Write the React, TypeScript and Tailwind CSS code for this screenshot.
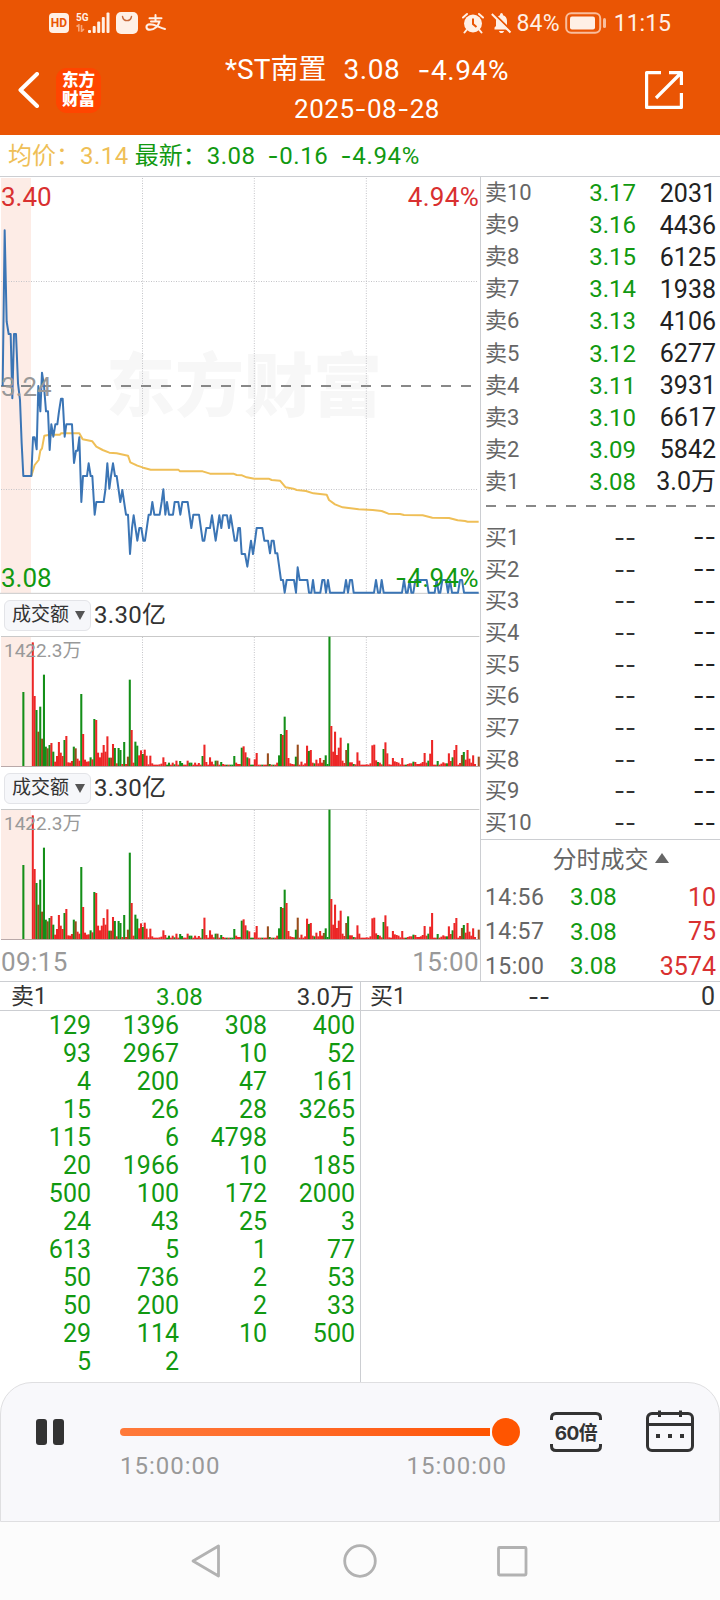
import { Fragment } from "react";

const SELLS = [
  ["卖10", "3.17", "2031"],
  ["卖9", "3.16", "4436"],
  ["卖8", "3.15", "6125"],
  ["卖7", "3.14", "1938"],
  ["卖6", "3.13", "4106"],
  ["卖5", "3.12", "6277"],
  ["卖4", "3.11", "3931"],
  ["卖3", "3.10", "6617"],
  ["卖2", "3.09", "5842"],
  ["卖1", "3.08", "3.0万"],
];

const BUYS = ["买1", "买2", "买3", "买4", "买5", "买6", "买7", "买8", "买9", "买10"];

const TRADES = [
  ["14:56", "3.08", "10"],
  ["14:57", "3.08", "75"],
  ["15:00", "3.08", "3574"],
];

const QUEUE = [
  ["129", "1396", "308", "400"],
  ["93", "2967", "10", "52"],
  ["4", "200", "47", "161"],
  ["15", "26", "28", "3265"],
  ["115", "6", "4798", "5"],
  ["20", "1966", "10", "185"],
  ["500", "100", "172", "2000"],
  ["24", "43", "25", "3"],
  ["613", "5", "1", "77"],
  ["50", "736", "2", "53"],
  ["50", "200", "2", "33"],
  ["29", "114", "10", "500"],
  ["5", "2", "", ""],
];

// chart units: 3 per css pixel
const PRICE_LINE =
  "8,648 14,181 20,455 26,492 32,492 37,685 42,492 48,492 54,640 60,690 65,820 70,918 94,918 99,802 104,802 110,838 115,648 121,724 126,608 132,648 138,724 144,724 149,840 154,763 160,800 166,763 172,763 177,724 183,686 188,686 194,800 199,763 216,763 222,879 228,842 233,842 238,802 244,996 249,918 261,918 266,880 272,918 277,918 284,1034 289,996 311,996 316,960 322,880 328,956 333,918 339,880 345,918 350,918 361,996 367,960 378,1034 384,1034 390,1152 396,1074 401,1036 412,1112 418,1074 424,1074 430,1112 435,1112 446,1034 452,1034 457,996 463,1034 479,1034 485,996 490,958 496,1034 501,996 507,1034 519,1034 524,996 535,996 541,1034 547,996 563,996 574,1074 580,1034 597,1034 608,1112 613,1112 619,1074 630,1074 636,1036 647,1112 658,1036 664,1074 669,1036 681,1036 687,1074 692,1036 704,1112 710,1112 715,1074 720,1074 725,1152 735,1152 742,1190 753,1112 759,1152 765,1112 770,1074 787,1074 793,1112 804,1112 810,1150 815,1112 821,1112 826,1150 832,1150 843,1230 849,1230 854,1268 860,1230 882,1230 888,1268 893,1192 899,1230 922,1230 927,1268 934,1268 939,1230 944,1268 961,1268 967,1230 973,1230 978,1268 984,1230 990,1268 1032,1268 1038,1230 1044,1268 1050,1230 1056,1230 1061,1268 1122,1268 1128,1230 1134,1268 1140,1268 1145,1230 1151,1268 1206,1268 1212,1230 1218,1268 1223,1268 1229,1230 1234,1268 1240,1268 1246,1230 1280,1230 1286,1268 1304,1268 1310,1230 1316,1268 1321,1268 1327,1230 1338,1230 1344,1268 1350,1230 1356,1268 1374,1268 1380,1230 1386,1230 1392,1268 1436,1268";

const AVERAGE_LINE =
  "94,918 104,885 116,870 121,842 126,835 133,797 149,794 180,794 183,790 238,790 248,808 277,814 289,830 308,840 328,848 350,850 384,857 391,877 412,887 430,893 452,899 535,899 540,904 608,904 630,911 700,911 710,915 726,916 740,922 763,926 806,926 815,930 840,932 857,952 880,956 890,960 918,963 940,970 980,974 987,990 1005,1003 1028,1012 1076,1018 1118,1020 1145,1023 1165,1031 1200,1032 1212,1035 1268,1036 1297,1043 1347,1044 1373,1051 1395,1053 1403,1055 1436,1055";

const VOLUME =
  "r373 r212 g170 d105 g180 d84 g276 g60 d55 g65 r71 g45 r15 r32 r74 r42 r32 g80 r92 r13 r12 r17 g60 d55 r24 r18 g218 r98 r21 r15 r16 g28 r22 g143 r140 r42 r28 r42 r65 r45 r91 g27 d27 r68 g56 r10 g56 g50 r8 g74 r8 d30 g261 r110 r12 g75 g63 r34 r49 g38 r51 r33 r7 r33 r10 r6 r6 r6 r7 r9 r28 r14 g6 g12 r6 r12 g7 r18 r6 g17 g11 r6 r6 r18 g12 g12 r6 r12 r6 r11 r6 g32 r66 r14 r6 r28 r15 r7 g18 d18 r6 g14 r8 r6 g6 r6 g6 g6 g32 r12 r8 r8 g57 r61 r43 g28 r25 g6 g6 r22 r41 r6 r6 g6 r6 r6 d40 g8 r6 g6 r6 r12 g34 g98 r95 g150 r110 r26 r10 r8 r7 g30 d66 r6 r15 r6 r10 r63 g47 r50 r12 g10 r21 r10 r26 r12 d20 g34 g8 g390 r122 r45 r105 r35 r57 r87 r18 r11 d50 g70 r13 r13 g8 r7 r43 r18 r6 r6 r6 r7 r6 r10 r64 r66 r19 g14 r12 r7 g53 r73 r40 r7 r6 r26 r16 r14 r12 r7 r26 r6 g6 r8 r10 r10 g15 r14 r8 r8 r10 r14 r41 r12 g18 r39 r80 r6 r6 g17 r6 r9 r13 r10 g10 r40 r17 g28 r50 r65 r6 r11 d35 g44 r21 r50 r24 r12 r34 r8 r0 d30".split(
    " "
  );

const BAR_COLORS: Record<string, string> = { r: "#ec2626", g: "#148f18", d: "#984c1c" };

// hyphens are drawn with the wider Inter dash
const Num = ({ children }: { children: string }) => (
  <>
    {children.split("-").map((part, i) => (
      <Fragment key={i}>
        {i > 0 && <span className="font-['Inter',sans-serif]">-</span>}
        {part}
      </Fragment>
    ))}
  </>
);

const StatusBar = () => (
  <div className="flex h-[46px] items-center pl-[49px] pr-[49px] text-[#fff0e6]">
    <div className="flex h-5 w-5 items-center justify-center rounded bg-[#fff0e6] text-[12px] leading-none font-bold text-[#ea5504]">
      HD
    </div>
    <div className="ml-[7px] flex h-[22px] flex-col">
      <span className="text-[10px] leading-[12px] font-bold">5G</span>
      <svg width="9" height="8" viewBox="0 0 9 8" fill="none" stroke="#f8a578" strokeWidth="1.6">
        <path d="M0.5 2.5 L2.8 1 V7.5 M5.5 1 V7.5 L8 5" />
      </svg>
    </div>
    <svg className="-ml-[1px]" width="22" height="22" viewBox="0 0 22 22" fill="currentColor">
      <rect x="0" y="18" width="3" height="3" rx="1" />
      <rect x="4.7" y="14" width="3" height="7" rx="1" />
      <rect x="9.2" y="9.5" width="3" height="11.5" rx="1" />
      <rect x="13.8" y="5" width="3" height="16" rx="1" />
      <rect x="18.5" y="0.5" width="3" height="20.5" rx="1" />
    </svg>
    <svg className="ml-[6px]" width="22" height="22" viewBox="0 0 22 22">
      <rect width="22" height="22" rx="5" fill="#fff0e6" />
      <path d="M6.5 4.5 C7.5 10 14.500 10 15.5 4.5" fill="none" stroke="#c86a3c" strokeWidth="1.4" strokeLinecap="round" />
    </svg>
    <svg className="ml-[7px]" width="22" height="18" viewBox="0 0 22 18" fill="none" stroke="currentColor" strokeWidth="2" strokeLinecap="round">
      <path d="M4.5 4.2 H16.5 M10.5 1 V7.500 M6 7.500 H14.5 C13.5 12 9.500 15.800 5 15.800 C0.500 15.800 0 10.500 5 10.200 C10 10.200 14 13.500 20 15" />
    </svg>
    <div className="ml-auto flex items-center">
      <svg width="22" height="22" viewBox="0 0 22 22">
        <circle cx="11" cy="11.5" r="9" fill="currentColor" />
        <path d="M1 5.5 L5 2 M21 5.5 L17 2 M4.5 18 L2.5 20.5 M17.5 18 L19.5 20.5" stroke="currentColor" strokeWidth="2" strokeLinecap="round" />
        <path d="M11 6.5 V12 L14.5 15" fill="none" stroke="#ea5504" strokeWidth="2" />
      </svg>
      <svg className="ml-[7px]" width="21" height="22" viewBox="0 0 21 22">
        <path d="M3.5 17.5 V15.5 L5 14 V9 C5 5.5 7 3.7 9 3.2 C9 0.3 12 0.3 12 3.2 C14.5 3.7 16 6 16 9 V14 L17.5 15.5 V17.5 Z M8 19 H13 C12.5 21.8 8.5 21.8 8 19 Z" fill="currentColor" />
        <path d="M1.5 0.5 L21 19.5" stroke="#ea5504" strokeWidth="2.2" />
        <path d="M0.8 2 L19.5 20.5" stroke="currentColor" strokeWidth="2" />
      </svg>
      <span className="ml-1 pt-px text-[23px] leading-none tracking-[0.2px]">84%</span>
      <svg className="ml-[5px]" width="42" height="22" viewBox="0 0 42 22">
        <rect x="1.2" y="1.2" width="34" height="19.6" rx="5" fill="none" stroke="#f9bd9c" strokeWidth="2" />
        <rect x="5" y="4.5" width="25" height="13" rx="2" fill="currentColor" />
        <rect x="38" y="6" width="3" height="10" rx="1.5" fill="#f9bd9c" />
      </svg>
      <span className="ml-[7px] pt-px text-[23px] leading-none">11:15</span>
    </div>
  </div>
);

const Header = () => (
  <header className="h-[135px] shrink-0 bg-[#ea5504]">
    <StatusBar />
    <div className="flex h-[88px] text-white">
      <svg className="mt-[26px] ml-[17px]" width="24" height="36" viewBox="0 0 24 36" fill="none" stroke="currentColor" strokeWidth="4" strokeLinecap="round" strokeLinejoin="round">
        <path d="M20 2 L3.5 18 L20 34" />
      </svg>
      <div className="mt-[22px] ml-[15px] flex h-[45px] w-[45px] flex-col items-center justify-center rounded-[11px] bg-[#ff4500] text-[16.5px] leading-[18.5px] font-black">
        <span>东方</span>
        <span>财富</span>
      </div>
      <div className="flex w-[532px] flex-col items-center">
        <div className="flex h-[47px] items-center gap-[17px] pt-px text-[28px] leading-none tracking-[0.6px]">
          <span className="tracking-normal">*ST南置</span>
          <span>3.08</span>
          <span>
            <Num>-4.94%</Num>
          </span>
        </div>
        <div className="flex h-8 items-center text-[26px] leading-none tracking-[0.5px]">
          <Num>2025-08-28</Num>
        </div>
      </div>
      <svg className="mt-[24px] ml-[11px] shrink-0" width="40" height="40" viewBox="0 0 40 40" fill="none" stroke="currentColor" strokeWidth="3.2" strokeLinejoin="round">
        <path d="M17 2.6 H2.6 V37.4 H37.4 V23 M25 2.6 H37.4 V15 M37 3 L12 28" />
      </svg>
    </div>
  </header>
);

const GRID_X = [427.5, 763, 1099];

const PriceChart = () => (
  <div className="relative h-[417px] text-[26px] leading-none">
    <div className="absolute top-[171px] left-[106px] text-[69px] leading-[80px] font-black whitespace-nowrap text-[#f7f7f7]">
      东方财富
    </div>
    <svg className="absolute inset-0" width="480" height="417" viewBox="0 21 1440 1251" fill="none">
      <rect x="3" y="24" width="90" height="1245" fill="#fdece6" />
      <g stroke="#c4c4c8" strokeWidth="3" strokeDasharray="3 4.5">
        {GRID_X.map((x) => (
          <path key={x} d={`M${x} 24 V1269`} />
        ))}
        <path d="M3 334.5 H1434 M3 958.5 H1434" />
      </g>
      <path d="M3 648 H1416" stroke="#888" strokeWidth="5.500" strokeDasharray="30 30" />
      <path d="M0 1270 H1438" stroke="#c9c9c9" strokeWidth="3" />
      <polyline points={AVERAGE_LINE} stroke="#efbf57" strokeWidth="6" strokeLinejoin="round" />
      <polyline points={PRICE_LINE} stroke="#3b75b5" strokeWidth="6" strokeLinejoin="round" />
    </svg>
    <span className="absolute top-[7px] left-[1px] text-[#d93030]">3.40</span>
    <span className="absolute top-[7px] right-[1px] text-[#d93030] tracking-[0.3px]">4.94%</span>
    <span className="absolute top-[197px] left-[1px] text-[#999]">3.24</span>
    <span className="absolute bottom-[3px] left-[1px] text-[#119911]">3.08</span>
    <span className="absolute right-[1px] bottom-[3px] text-[#119911] tracking-[0.4px]">
      <Num>-4.94%</Num>
    </span>
  </div>
);

const VolumeChart = () => (
  <>
    <div className="flex h-[42px] items-center pl-1 text-[#333]">
      <div className="flex h-[31px] w-[87px] items-center rounded-md border border-[#e3e4e8] bg-[#f6f7fa] pl-[7px] text-[19px] leading-none">
        <span className="-mt-px">成交额</span>
        <svg className="ml-[6px]" width="10" height="9" viewBox="0 0 10 9">
          <path d="M0 0 H10 L5 9 Z" fill="#555" />
        </svg>
      </div>
      <span className="-mt-px ml-[3px] text-[24px] leading-none tracking-[0.3px]">3.30亿</span>
    </div>
    <div className="relative h-[131px]">
      <svg width="480" height="131" viewBox="0 135 1440 393">
        <rect x="3" y="136" width="90" height="391" fill="#fdece6" />
        <path d="M3 136.5 H1438" stroke="#c9c9c9" strokeWidth="3" />
        {GRID_X.map((x) => (
          <path key={x} d={`M${x} 138 V527`} stroke="#c4c4c8" strokeWidth="3" strokeDasharray="3 4.5" />
        ))}
        <rect x="67" y="303" width="6.2" height="224" fill={BAR_COLORS.g} />
        {VOLUME.map((bar, i) => {
          const height = Number(bar.slice(1));
          return <rect key={i} x={95.2 + i * 5.598} y={527 - height} width="6.2" height={height} fill={BAR_COLORS[bar[0]]} />;
        })}
        <path d="M3 526.5 H1438" stroke="#b9a9a9" strokeWidth="3" />
      </svg>
      <span className="absolute top-[5px] left-[4px] text-[19px] leading-none text-[#999]">1422.3万</span>
    </div>
  </>
);

const OrderRow = ({ label, price, amount }: { label: string; price: string; amount: string }) => (
  <div className="flex flex-1 items-center leading-none">
    <span className="w-[70px] text-[22px] text-[#666]">{label}</span>
    <span className={`w-[81px] text-right text-[24px] ${price === "--" ? "text-[#333]" : "text-[#119911]"}`}>
      <Num>{price}</Num>
    </span>
    <span className="ml-auto text-[25px] text-[#222]">
      <Num>{amount}</Num>
    </span>
  </div>
);

const OrderBook = () => (
  <div className="flex w-[240px] flex-col border-l border-[#ccced2]">
    <div className="flex h-[321px] shrink-0 flex-col pr-1 pl-1">
      {SELLS.map(([label, price, amount]) => (
        <OrderRow key={label} label={label} price={price} amount={amount} />
      ))}
    </div>
    <svg className="ml-[5px] h-6 shrink-0" width="229" height="24" viewBox="0 0 229 24">
      <path d="M0 8 H229" stroke="#888" strokeWidth="2" strokeDasharray="10 10" />
    </svg>
    <div className="flex h-[317px] shrink-0 flex-col pr-1 pl-1">
      {BUYS.map((label) => (
        <OrderRow key={label} label={label} price="--" amount="--" />
      ))}
    </div>
    <div className="flex h-[142px] shrink-0 flex-col border-t border-[#ccced2] pr-1 pl-1">
      <div className="flex h-[40px] shrink-0 items-center justify-center pl-[20px] text-[24px] leading-none text-[#666]">
        分时成交
        <svg className="-mt-1 ml-[6px]" width="14" height="10" viewBox="0 0 14 10">
          <path d="M7 0 L14 10 H0 Z" fill="#666" />
        </svg>
      </div>
      {TRADES.map(([time, price, amount]) => (
        <div key={time} className="flex h-[34.5px] shrink-0 items-center leading-none">
          <span className="w-[85px] text-[23px] tracking-[0.4px] text-[#666]">{time}</span>
          <span className="text-[24px] text-[#119911]">{price}</span>
          <span className="ml-auto text-[25px] text-[#d93030]">{amount}</span>
        </div>
      ))}
    </div>
  </div>
);

const Queue = () => (
  <div className="flex h-[401px] shrink-0 border-t border-[#ccced2] leading-none">
    <div className="w-[361px] border-r border-[#ccced2]">
      <div className="flex h-[29px] items-center border-b border-[#ccced2] pt-px pr-[6px] pl-[11px] text-[#333]">
        <span className="w-[145px] text-[23px]">卖1</span>
        <span className="text-[24px] text-[#119911]">3.08</span>
        <span className="ml-auto text-[24px]">3.0万</span>
      </div>
      {QUEUE.map((row, i) => (
        <div key={i} className="flex h-7 pl-[3px] text-right text-[25px] leading-[30px] text-[#119911]">
          {row.map((value, j) => (
            <span key={j} className="w-[88px]">
              {value}
            </span>
          ))}
        </div>
      ))}
    </div>
    <div className="flex-1">
      <div className="flex h-[29px] items-center border-b border-[#ccced2] pt-px pr-[5px] pl-[9px] text-[#333]">
        <span className="w-[158px] text-[23px]">买1</span>
        <span className="text-[24px]">
          <Num>--</Num>
        </span>
        <span className="ml-auto text-[25px]">0</span>
      </div>
    </div>
  </div>
);

const Player = () => (
  <div className="flex h-[140px] shrink-0 rounded-t-[32px] border border-[#dfdfe1] bg-[#f8f8fb]">
    <div className="mt-[36px] ml-[35px] flex h-[26px] gap-[6px]">
      <div className="w-[11px] rounded-[3px] bg-[#333]" />
      <div className="w-[11px] rounded-[3px] bg-[#333]" />
    </div>
    <div className="mt-[35px] ml-[56px] w-[400px]">
      <div className="flex h-7 items-center">
        <div className="h-2 w-[370px] rounded-l-full bg-linear-to-r from-[#ff7a3a] to-[#ff5500]" />
        <div className="ml-[2px] h-7 w-7 rounded-full bg-[#ff5500]" />
      </div>
      <div className="mt-[8px] flex w-[387px] justify-between text-[24px] leading-none tracking-[1px] text-[#999]">
        <span>15:00:00</span>
        <span>15:00:00</span>
      </div>
    </div>
    <div className="relative mt-[29px] ml-[30px] flex h-10 w-[52px] items-center justify-center">
      <svg className="absolute inset-0" width="52" height="40" viewBox="0 0 52 40" fill="none" stroke="#333" strokeWidth="3">
        <path d="M1.5 8 V6 Q1.5 1.5 6 1.5 H46 Q50.5 1.5 50.5 6 V8 M1.5 32 V34 Q1.5 38.5 6 38.5 H46 Q50.5 38.5 50.5 34 V32" />
      </svg>
      <span className="pt-[3px] font-['Inter','Noto_Sans_CJK_SC',sans-serif] text-[19px] leading-none font-bold tracking-[-0.6px] whitespace-nowrap text-[#333]">
        60倍
      </span>
    </div>
    <svg className="mt-[27px] ml-[44px]" width="48" height="42" viewBox="0 0 48 42" fill="none" stroke="#333" strokeWidth="3">
      <rect x="1.5" y="3.5" width="45" height="37" rx="4.5" />
      <path d="M2 14.5 H46" />
      <path d="M13.5 0.5 V7 M34.5 0.5 V7" />
      <path d="M10 26 H14 M22 26 H26 M34 26 H38" strokeWidth="4" />
    </svg>
  </div>
);

const NavBar = () => (
  <svg className="shrink-0 bg-[#fcfcfc]" width="720" height="78" viewBox="0 0 720 78" fill="none" stroke="#b2b2b2" strokeWidth="2.8" strokeLinejoin="round">
    <path d="M193 39 L218.5 24 V54 Z" />
    <circle cx="360" cy="39" r="15.3" />
    <rect x="498.5" y="25.5" width="27.5" height="27.5" rx="1" />
  </svg>
);

export default function App() {
  return (
    <div className="flex h-[1600px] w-[720px] flex-col overflow-hidden bg-white font-['Roboto','Noto_Sans_CJK_SC',sans-serif]">
      <Header />
      <div className="flex h-[41px] shrink-0 items-center pt-px pl-2 text-[24px] leading-none text-[#119911]">
        <span className="text-[#efbf57]">
          均价：<span className="tracking-[0.5px]">3.14</span>
        </span>
        <span className="ml-[6px]">
          最新：<span className="tracking-[0.5px]">3.08</span>
        </span>
        <span className="ml-[12px] tracking-[0.6px]">
          <Num>-0.16</Num>
        </span>
        <span className="ml-[12px] tracking-[0.7px]">
          <Num>-4.94%</Num>
        </span>
      </div>
      <div className="flex h-[805px] shrink-0 border-t border-[#ccced2]">
        <div className="w-[480px]">
          <PriceChart />
          <VolumeChart />
          <VolumeChart />
          <div className="flex h-[41px] items-center justify-between px-[1px] pt-[3px] text-[26px] leading-none tracking-[0.4px] text-[#999]">
            <span>09:15</span>
            <span>15:00</span>
          </div>
        </div>
        <OrderBook />
      </div>
      <Queue />
      <Player />
      <NavBar />
    </div>
  );
}
